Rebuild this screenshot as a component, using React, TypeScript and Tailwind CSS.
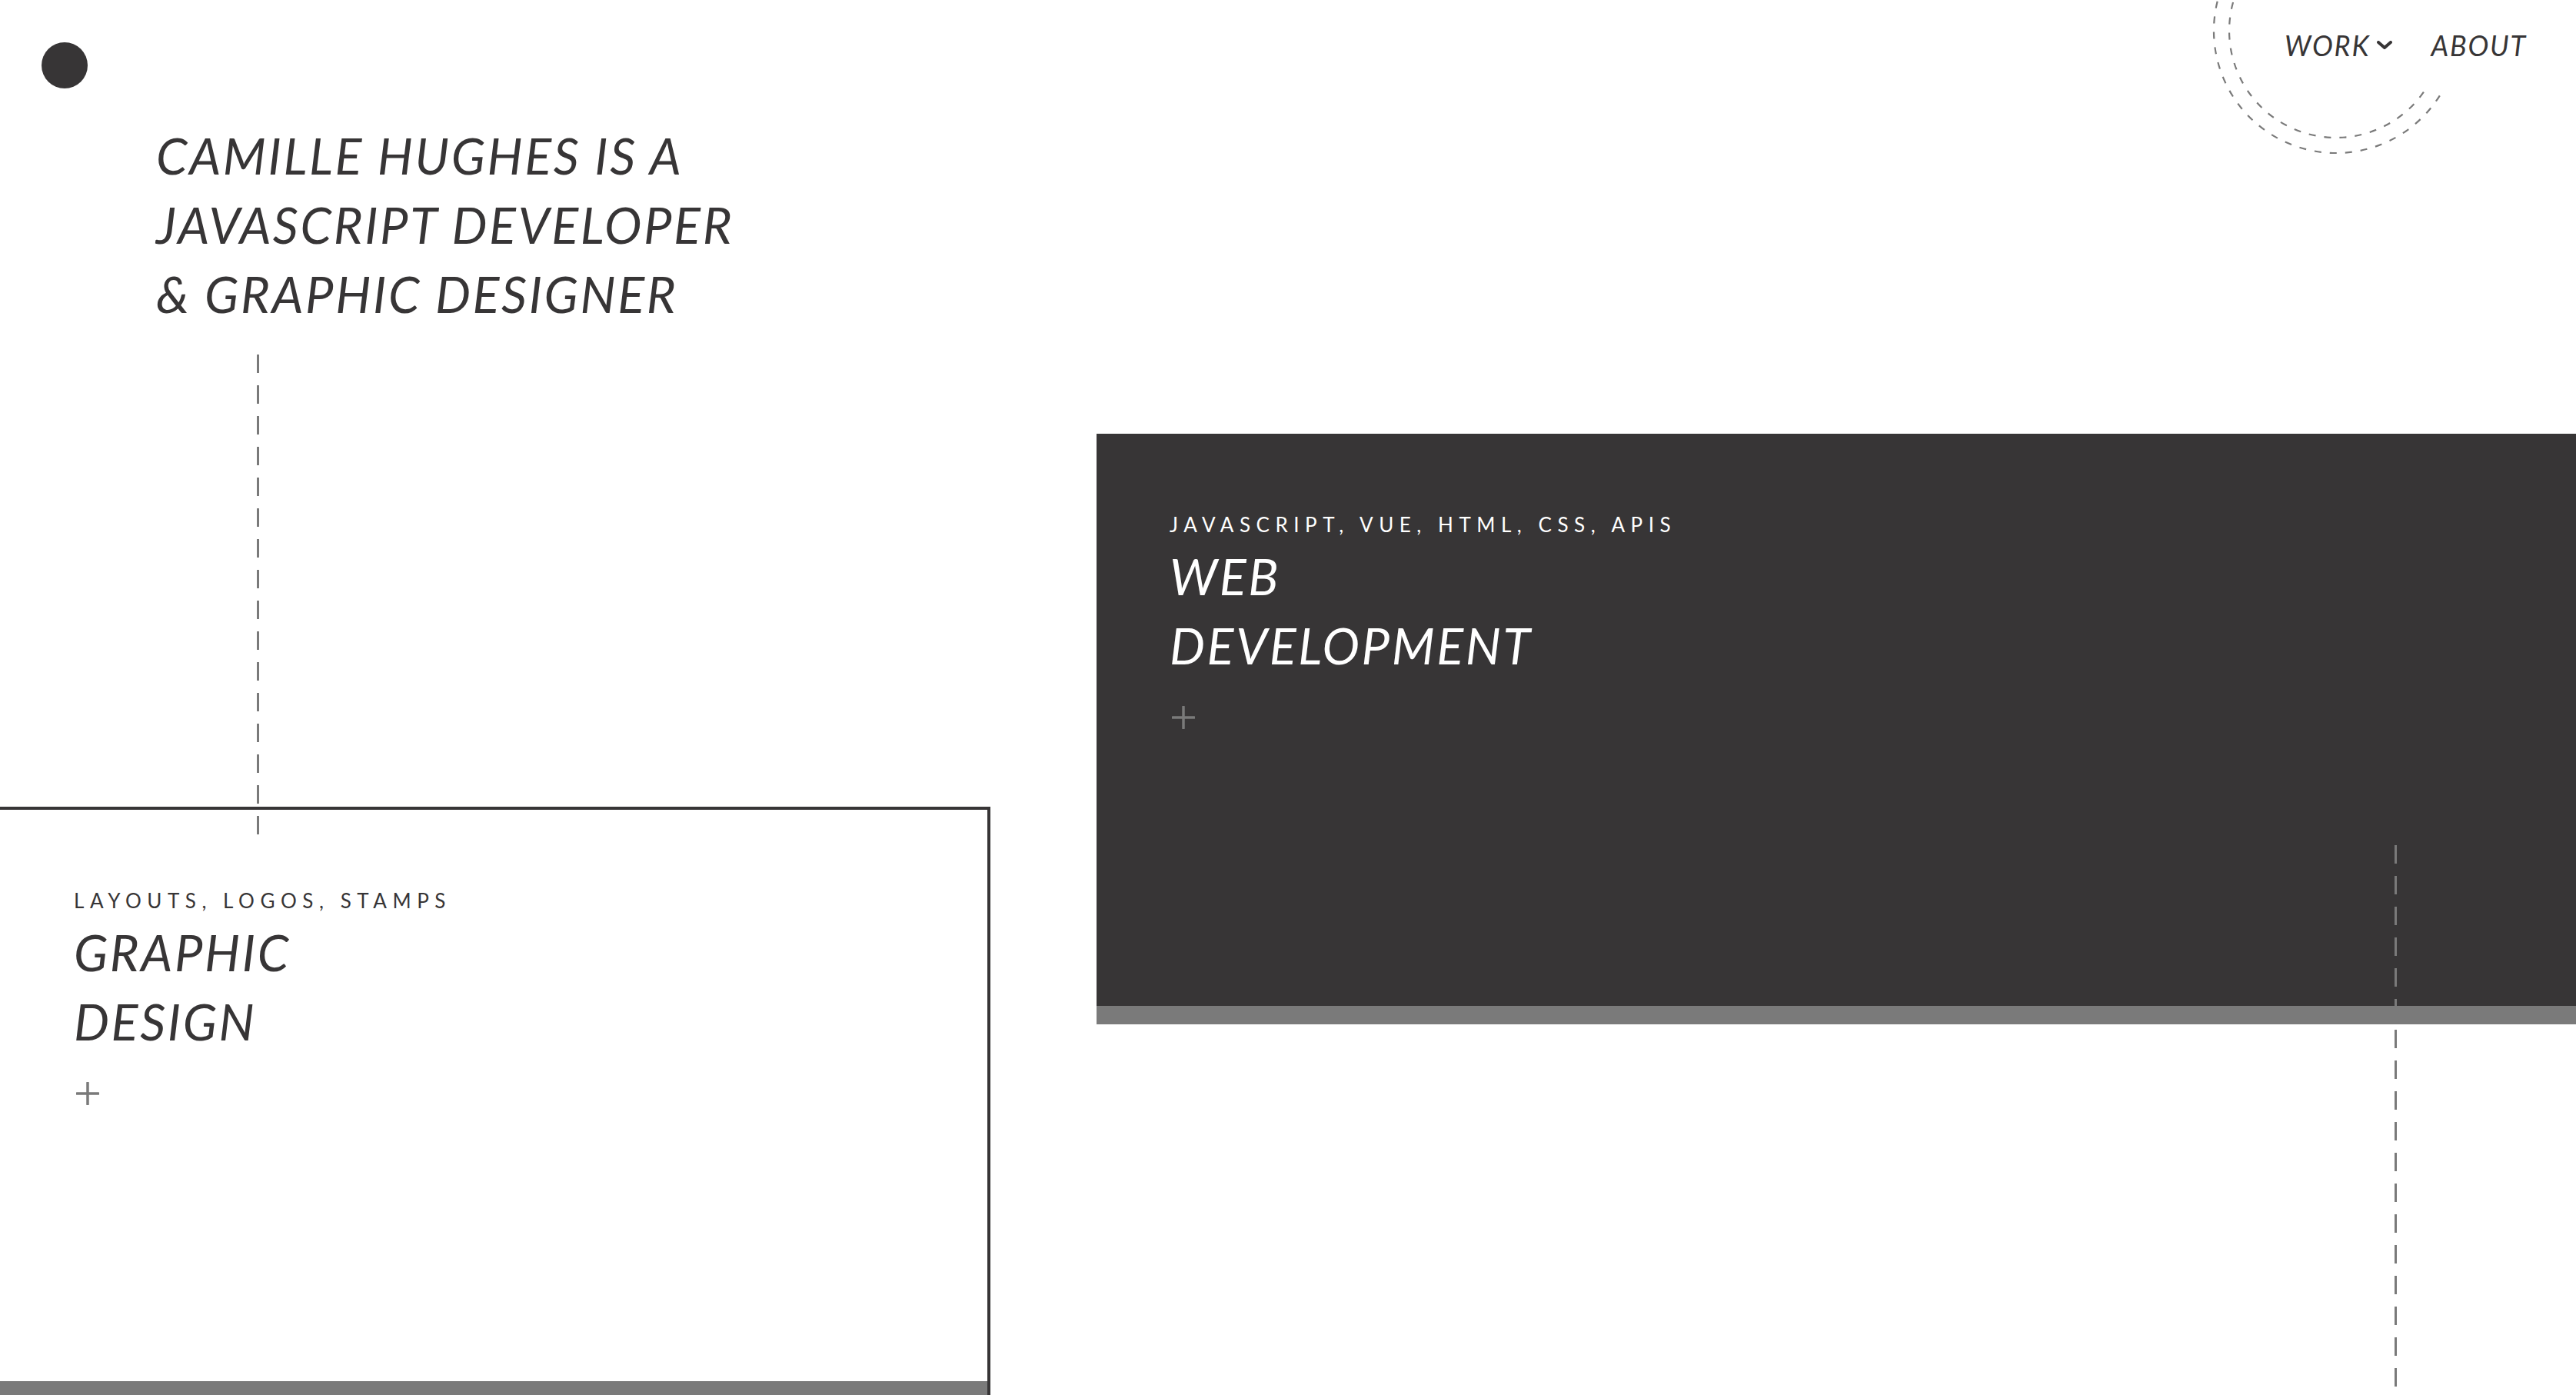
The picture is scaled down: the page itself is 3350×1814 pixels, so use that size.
import React from 'react'

const dark = 'bg-[#373536]'

function Plus({ className = '' }: { className?: string }) {
  return (
    <svg width="30" height="30" viewBox="0 0 30 30" className={className}>
      <line x1="15" y1="1" x2="15" y2="29" stroke="#7a7a7a" strokeWidth="3.5" strokeLinecap="round" />
      <line x1="1" y1="15" x2="29" y2="15" stroke="#7a7a7a" strokeWidth="3.5" strokeLinecap="round" />
    </svg>
  )
}

function Card({ tags, title, tone }: { tags: string; title: string[]; tone: 'dark' | 'light' }) {
  const isDark = tone === 'dark'
  return (
    <div className={isDark ? 'text-white' : 'text-[#373536]'}>
      <p className="text-[26px] leading-[36px] tracking-[0.29em] font-normal not-italic">{tags}</p>
      <h2 className="mt-[4px] text-[65px] leading-[90px] tracking-[0.04em] font-normal italic">
        {title.map((t) => (
          <span key={t} className="block">{t}</span>
        ))}
      </h2>
      <Plus className="mt-[34px] ml-[3px]" />
    </div>
  )
}

export default function App() {
  return (
    <div
      className="relative w-[3350px] h-[1814px] overflow-hidden bg-white text-[#373536]"
      style={{ fontFamily: 'Lato, "Open Sans", sans-serif' }}
    >
      {/* dashed circles behind the nav */}
      <svg className="absolute top-0 right-0 pointer-events-none" width="500" height="220" viewBox="0 0 500 220">
        <path d="M 322.8 124.3 A 159 159 0 1 1 188 -119" fill="none" stroke="#7a7a7a" strokeWidth="2.2" strokeDasharray="9 11" />
        <path d="M 301.9 119.7 A 139 139 0 1 1 188 -99" fill="none" stroke="#7a7a7a" strokeWidth="2.2" strokeDasharray="9 11" />
      </svg>

      <header className="relative flex items-start justify-between h-[157px] pl-[54px] pr-[64px]">
        <div className={`mt-[55px] size-[60px] rounded-full ${dark}`} />
        <nav className="mt-[37px] flex items-center gap-[50px] text-[36px] leading-[44px] tracking-[0.05em] font-normal italic">
          <a className="flex items-center gap-[9px]">
            WORK
            <svg width="20" height="12" viewBox="0 0 20 12">
              <polyline points="2,2 10,9 18,2" fill="none" stroke="#373536" strokeWidth="4" strokeLinecap="round" strokeLinejoin="round" />
            </svg>
          </a>
          <a>ABOUT</a>
        </nav>
      </header>

      <div className="flex items-start">
        <div className="w-[1288px] shrink-0">
          <h1 className="pl-[203px] text-[65px] leading-[90px] tracking-[0.04em] font-normal italic">
            CAMILLE HUGHES IS A
            <br />
            JAVASCRIPT DEVELOPER
            <br />
            &amp; GRAPHIC DESIGNER
          </h1>
          <div className="relative z-10 ml-[334px] mt-[34px] h-[624px] w-[3px] bg-[repeating-linear-gradient(to_bottom,#7a7a7a_0_24px,transparent_24px_40px)]" />
          <div className="-mt-[36px] border-t-4 border-r-4 border-[#373536]">
            <div className="h-[743px] pl-[96px] pt-[100px]">
              <Card tone="light" tags="LAYOUTS, LOGOS, STAMPS" title={['GRAPHIC', 'DESIGN']} />
            </div>
            <div className="h-[24px] bg-[#7a7a7a]" />
          </div>
        </div>

        <div className="ml-[138px] mt-[407px] flex-1">
          <div className={`relative h-[744px] pl-[95px] pt-[100px] ${dark}`}>
            <Card tone="dark" tags="JAVASCRIPT, VUE, HTML, CSS, APIS" title={['WEB', 'DEVELOPMENT']} />
            <div className="absolute left-[1688px] top-[535px] z-10 h-[800px] w-[3px] bg-[repeating-linear-gradient(to_bottom,#7a7a7a_0_24px,transparent_24px_40px)]" />
          </div>
          <div className="h-[24px] bg-[#7a7a7a]" />
        </div>
      </div>
    </div>
  )
}
